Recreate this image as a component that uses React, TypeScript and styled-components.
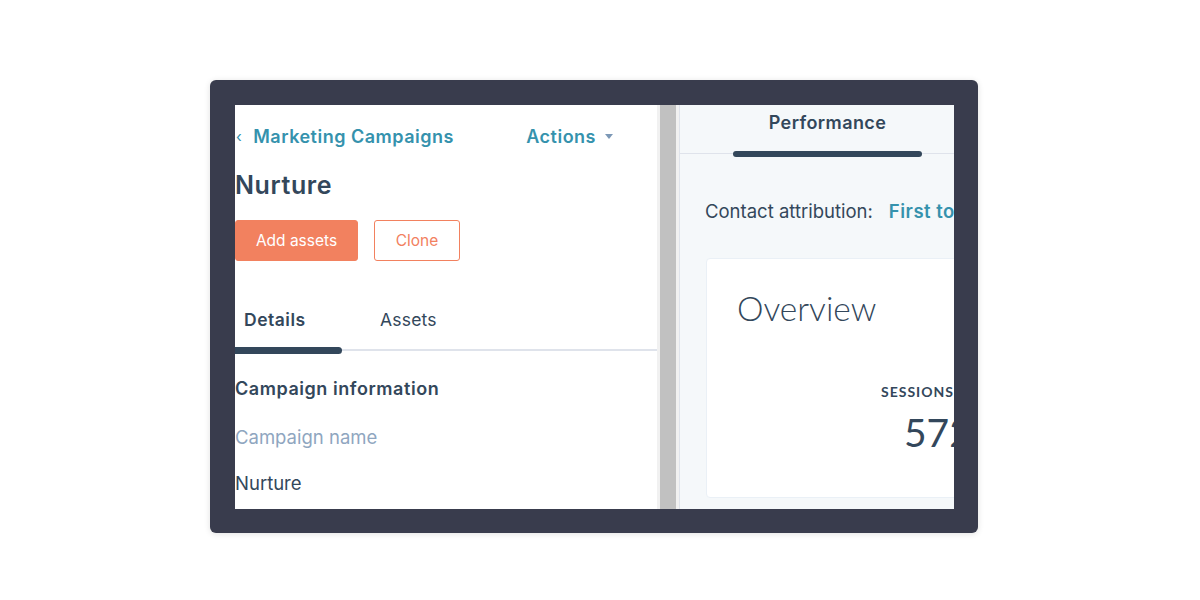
import React from "react";
import styled, { createGlobalStyle } from "styled-components";

const Global = createGlobalStyle`
  html, body { margin: 0; padding: 0; background: #ffffff; }
  body { font-family: Inter, "Noto Sans", sans-serif; color: #33475b; }
`;

const Page = styled.div`
  width: 1200px;
  height: 600px;
  padding: 80px 0 0 210px;
  box-sizing: border-box;
  display: flex;
  justify-content: flex-start;
  align-items: flex-start;
`;

const Frame = styled.div`
  width: 768px;
  height: 453px;
  flex-shrink: 0;
  box-sizing: border-box;
  padding: 25px 24px 24px 25px;
  background: #393c4d;
  border-radius: 6px;
  box-shadow: 0 1px 6px rgba(0, 0, 0, 0.12);
`;

const Screen = styled.div`
  width: 100%;
  height: 100%;
  display: grid;
  grid-template-columns: 422px 23px 1fr;
  overflow: hidden;
  background: #fff;
`;

const LeftPanel = styled.div`
  background: #fff;
  overflow: hidden;
  display: flex;
  flex-direction: column;
`;

const Crumbs = styled.div`
  display: flex;
  align-items: center;
  height: 24px;
  margin-top: 19px;
  font-weight: 600;
  font-size: 18px;
  letter-spacing: 0.5px;
  color: #3592ad;
`;

const Back = styled.span`
  font-size: 15px;
  font-weight: 400;
  margin: 0 11px 0 1px;
  color: #3592ad;
`;

const CrumbLink = styled.span`
  flex: 1;
`;

const Actions = styled.span`
  display: flex;
  align-items: center;
  gap: 9px;
  margin-right: 44px;
`;

const Caret = styled.span`
  width: 0;
  height: 0;
  border-left: 4.5px solid transparent;
  border-right: 4.5px solid transparent;
  border-top: 5px solid #7c98b6;
  margin-top: 1px;
`;

const Title = styled.h1`
  margin: 21px 0 0 0;
  font-size: 25px;
  letter-spacing: 0.6px;
  line-height: 32px;
  font-weight: 600;
  color: #33475b;
`;

const ButtonRow = styled.div`
  display: flex;
  gap: 16px;
  margin-top: 19px;
`;

const Button = styled.button<{ $primary?: boolean }>`
  height: 41px;
  box-sizing: border-box;
  border-radius: 3px;
  font-family: Inter, "Noto Sans", sans-serif;
  font-size: 15.5px;
  font-weight: 400;
  padding: 0;
  width: ${(p) => (p.$primary ? "123px" : "86px")};
  background: ${(p) => (p.$primary ? "#f2815f" : "#fff")};
  color: ${(p) => (p.$primary ? "#fff" : "#f2815f")};
  border: 1px solid #f2815f;
`;

const TabBar = styled.div`
  display: flex;
  margin-top: 44px;
  border-bottom: 2px solid #dfe3eb;
  height: 44px;
`;

const Tab = styled.div<{ $active?: boolean; $width: number; $pad: number }>`
  position: relative;
  width: ${(p) => p.$width}px;
  padding-left: ${(p) => p.$pad}px;
  box-sizing: border-box;
  font-size: 17.5px;
  line-height: 28px;
  padding-top: 1px;
  letter-spacing: ${(p) => (p.$active ? "0.5px" : "0.2px")};
  font-weight: ${(p) => (p.$active ? 600 : 400)};
  color: #33475b;
  &::after {
    content: "";
    display: ${(p) => (p.$active ? "block" : "none")};
    position: absolute;
    left: 0;
    right: 0;
    bottom: -5px;
    height: 7px;
    border-radius: 0 4px 4px 0;
    background: #33475b;
  }
`;

const Section = styled.h2`
  margin: 26px 0 0 0;
  font-size: 18px;
  letter-spacing: 0.55px;
  line-height: 24px;
  font-weight: 600;
  color: #33475b;
`;

const Label = styled.div`
  margin-top: 24px;
  font-size: 18.5px;
  line-height: 24px;
  color: #8fa6c0;
`;

const Value = styled.div`
  margin-top: 22px;
  font-size: 18.5px;
  line-height: 24px;
  color: #33475b;
`;

const Gutter = styled.div`
  display: grid;
  grid-template-columns: 3px 16px 3px 1px;
  & > span:nth-child(1) { background: #f1f1f1; }
  & > span:nth-child(2) { background: #c1c1c1; }
  & > span:nth-child(3) { background: #f1f1f1; }
  & > span:nth-child(4) { background: #dfe3eb; }
`;

const RightPanel = styled.div`
  background: #f5f8fa;
  display: flex;
  flex-direction: column;
  overflow: hidden;
`;

const RightTabs = styled.div`
  height: 48px;
  border-bottom: 1px solid #dfe3eb;
  display: flex;
  padding-left: 53px;
  flex-shrink: 0;
`;

const RightTab = styled.div`
  position: relative;
  width: 189px;
  flex-shrink: 0;
  text-align: center;
  font-size: 18px;
  letter-spacing: 0.4px;
  font-weight: 600;
  line-height: 24px;
  padding-top: 6px;
  color: #33475b;
  &::after {
    content: "";
    position: absolute;
    left: 0;
    right: 0;
    bottom: -4px;
    height: 6px;
    border-radius: 3px;
    background: #33475b;
  }
`;

const Attribution = styled.div`
  margin: 45px 0 0 25px;
  display: flex;
  gap: 16px;
  white-space: nowrap;
  font-size: 18.5px;
  line-height: 24px;
`;

const AttrLink = styled.span`
  color: #3592ad;
  font-weight: 600;
  letter-spacing: 0.5px;
`;

const Card = styled.div`
  margin: 35px 0 0 26px;
  width: 320px;
  height: 240px;
  flex-shrink: 0;
  background: #fff;
  border: 1px solid #eaf0f6;
  border-radius: 4px;
  box-sizing: border-box;
  padding: 29px 0 0 30px;
  font-family: Lato, "Noto Sans", sans-serif;
`;

const CardTitle = styled.div`
  font-size: 33.5px;
  font-weight: 300;
  line-height: 40px;
  color: #33475b;
`;

const Metric = styled.div`
  margin: 55px 0 0 144px;
  display: flex;
  flex-direction: column;
  align-items: flex-start;
`;

const MetricLabel = styled.div`
  font-size: 14px;
  font-weight: 700;
  letter-spacing: 1px;
  color: #33475b;
  line-height: 18px;
`;

const MetricValue = styled.div`
  margin: 9px 0 0 23px;
  font-size: 39px;
  font-weight: 400;
  line-height: 44px;
  color: #33475b;
`;

export default function App() {
  return (
    <>
      <Global />
      <Page>
        <Frame>
          <Screen>
            <LeftPanel>
              <Crumbs>
                <Back>‹</Back>
                <CrumbLink>Marketing Campaigns</CrumbLink>
                <Actions>
                  Actions <Caret />
                </Actions>
              </Crumbs>
              <Title>Nurture</Title>
              <ButtonRow>
                <Button $primary>Add assets</Button>
                <Button>Clone</Button>
              </ButtonRow>
              <TabBar>
                <Tab $active $width={107} $pad={9}>
                  Details
                </Tab>
                <Tab $width={120} $pad={38}>
                  Assets
                </Tab>
              </TabBar>
              <Section>Campaign information</Section>
              <Label>Campaign name</Label>
              <Value>Nurture</Value>
            </LeftPanel>
            <Gutter>
              <span />
              <span />
              <span />
              <span />
            </Gutter>
            <RightPanel>
              <RightTabs>
                <RightTab>Performance</RightTab>
              </RightTabs>
              <Attribution>
                <span>Contact attribution:</span>
                <AttrLink>First touch</AttrLink>
              </Attribution>
              <Card>
                <CardTitle>Overview</CardTitle>
                <Metric>
                  <MetricLabel>SESSIONS</MetricLabel>
                  <MetricValue>572</MetricValue>
                </Metric>
              </Card>
            </RightPanel>
          </Screen>
        </Frame>
      </Page>
    </>
  );
}
